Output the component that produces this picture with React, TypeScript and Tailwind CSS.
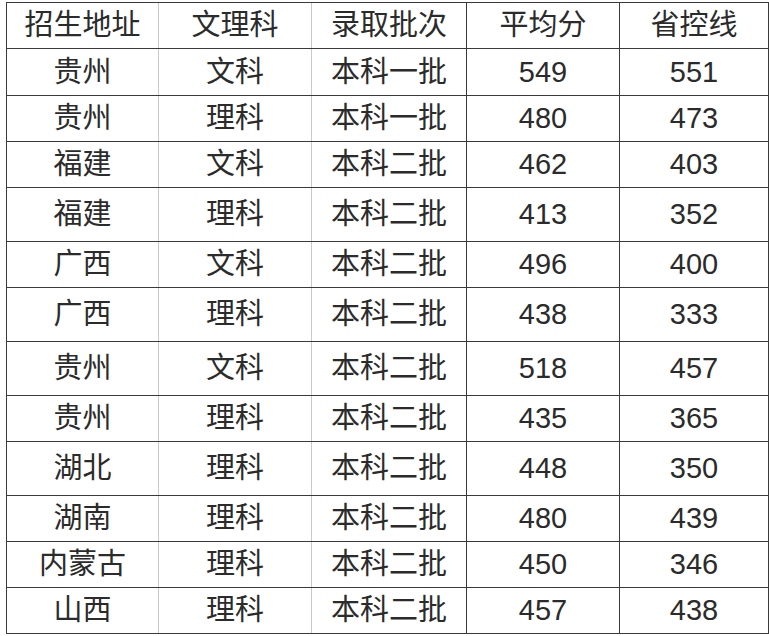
const COLS = ["w-[152px]", "w-[153px]", "w-[155px]", "w-[153px]", "w-[149px]"];
// column dividers: first two are faint gray, the rest dark
const DIVIDERS = ["border-[#c9c9c9]", "border-[#c9c9c9]", "border-[#3a3a3a]", "border-[#3a3a3a]", "border-[#3a3a3a]"];

const HEADER = ["招生地址", "文理科", "录取批次", "平均分", "省控线"];

const ROWS: { h: string; cells: string[] }[] = [
  { h: "h-[47px]", cells: ["贵州", "文科", "本科一批", "549", "551"] },
  { h: "h-[46px]", cells: ["贵州", "理科", "本科一批", "480", "473"] },
  { h: "h-[46px]", cells: ["福建", "文科", "本科二批", "462", "403"] },
  { h: "h-[54px]", cells: ["福建", "理科", "本科二批", "413", "352"] },
  { h: "h-[46px]", cells: ["广西", "文科", "本科二批", "496", "400"] },
  { h: "h-[54px]", cells: ["广西", "理科", "本科二批", "438", "333"] },
  { h: "h-[54px]", cells: ["贵州", "文科", "本科二批", "518", "457"] },
  { h: "h-[46px]", cells: ["贵州", "理科", "本科二批", "435", "365"] },
  { h: "h-[54px]", cells: ["湖北", "理科", "本科二批", "448", "350"] },
  { h: "h-[46px]", cells: ["湖南", "理科", "本科二批", "480", "439"] },
  { h: "h-[46px]", cells: ["内蒙古", "理科", "本科二批", "450", "346"] },
  { h: "h-[46px]", cells: ["山西", "理科", "本科二批", "457", "438"] },
];

function Row({ h, cells }: { h: string; cells: string[] }) {
  return (
    <div className={`flex border-b border-[#3a3a3a] ${h}`}>
      {cells.map((c, i) => (
        <div
          key={i}
          className={`flex items-center justify-center border-r ${COLS[i]} ${DIVIDERS[i]}`}
        >
          {c}
        </div>
      ))}
    </div>
  );
}

export default function App() {
  return (
    <div className="h-[636px] w-[769px] overflow-hidden bg-white pl-[6px] pt-[2px]">
      <div
        className="w-[763px] border-l border-t border-[#3a3a3a] text-[29px] leading-none text-[#2b2b2b]"
        style={{ fontFamily: '"Liberation Sans", "Noto Sans CJK SC", sans-serif' }}
      >
        <Row h="h-[46px]" cells={HEADER} />
        {ROWS.map((r, i) => (
          <Row key={i} h={r.h} cells={r.cells} />
        ))}
      </div>
    </div>
  );
}
